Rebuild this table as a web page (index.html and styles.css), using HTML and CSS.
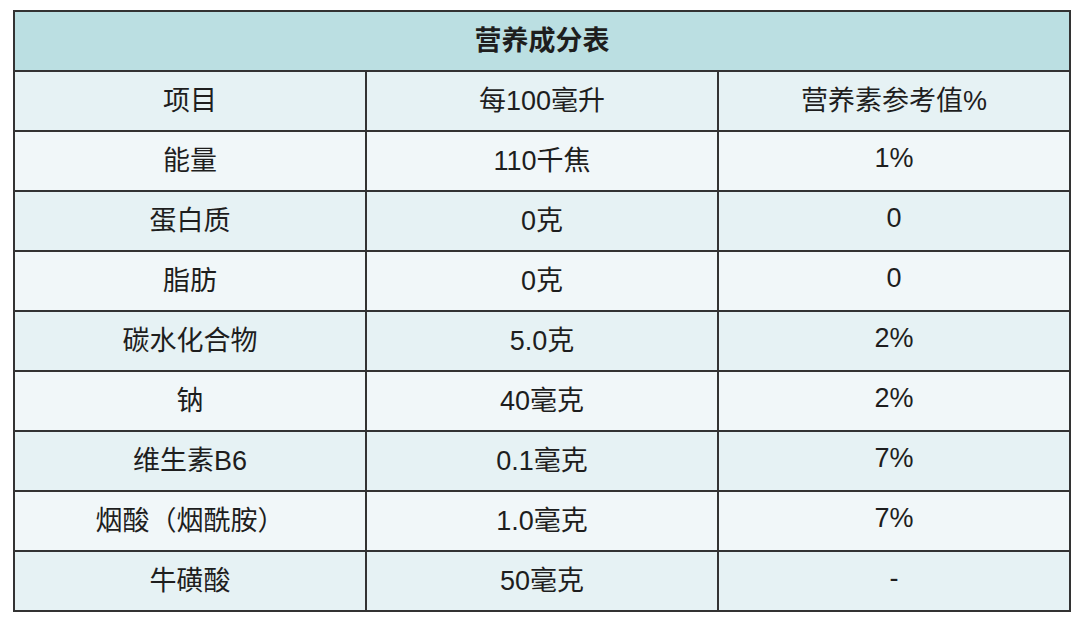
FILE: index.html
```html
<!DOCTYPE html>
<html lang="zh">
<head>
<meta charset="utf-8">
<title>营养成分表</title>
<link rel="stylesheet" href="styles.css">
</head>
<body>
<div class="page">
  <table class="nutrition">
    <thead>
      <tr class="title-row"><th colspan="3">营养成分表</th></tr>
      <tr class="head-row"><td>项目</td><td>每100毫升</td><td>营养素参考值%</td></tr>
    </thead>
    <tbody>
      <tr class="alt"><td>能量</td><td>110千焦</td><td>1%</td></tr>
      <tr><td>蛋白质</td><td>0克</td><td>0</td></tr>
      <tr class="alt"><td>脂肪</td><td>0克</td><td>0</td></tr>
      <tr><td>碳水化合物</td><td>5.0克</td><td>2%</td></tr>
      <tr class="alt"><td>钠</td><td>40毫克</td><td>2%</td></tr>
      <tr><td>维生素B6</td><td>0.1毫克</td><td>7%</td></tr>
      <tr class="alt"><td>烟酸（烟酰胺）</td><td>1.0毫克</td><td>7%</td></tr>
      <tr><td>牛磺酸</td><td>50毫克</td><td>-</td></tr>
    </tbody>
  </table>
</div>
</body>
</html>
```

FILE: styles.css
```css
html, body {
  margin: 0;
  padding: 0;
  background: #ffffff;
}
.page {
  padding: 10px 0 0 13px;
}
.nutrition {
  width: 1058px;
  border-collapse: collapse;
  table-layout: fixed;
  font-family: "Liberation Sans", "Noto Sans CJK SC", sans-serif;
  font-size: 27px;
  color: #1e1e1e;
}
.nutrition th,
.nutrition td {
  border: 2px solid #333333;
  height: 53px;
  padding: 0 0 5px 0;
  text-align: center;
  vertical-align: middle;
  background: #e6f2f4;
}
.nutrition .title-row th {
  background: #bbdfe2;
  font-weight: bold;
  font-size: 27px;
}
.nutrition tr.alt td {
  background: #f1f7f9;
}
```
